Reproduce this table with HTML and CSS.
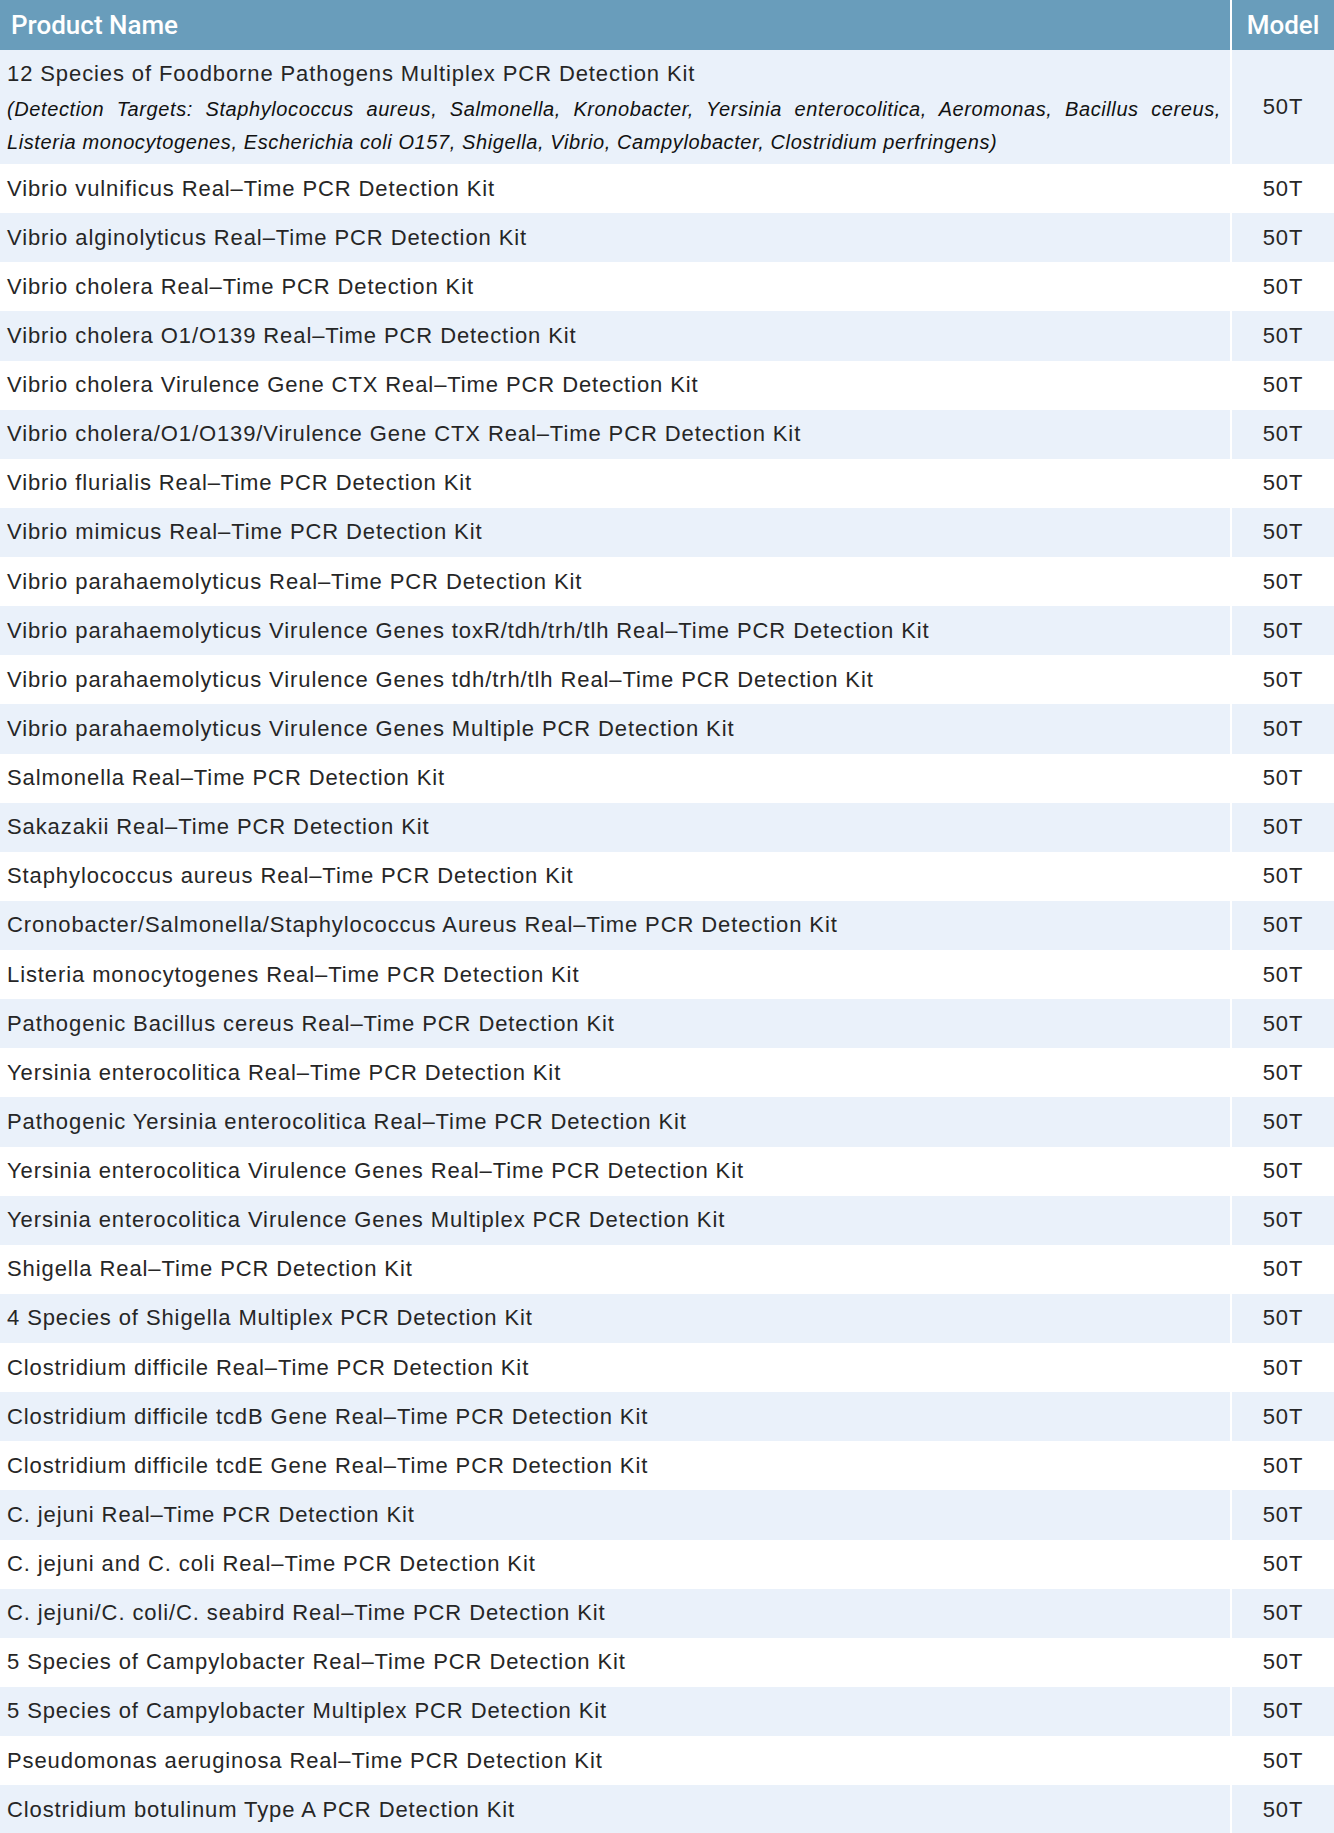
FILE: index.html
```html
<!DOCTYPE html>
<html lang="en">
<head>
<meta charset="utf-8">
<title>Product List</title>
<link rel="stylesheet" href="styles.css">
</head>
<body>
<div class="table">
  <div class="row head">
    <div class="name">Product Name</div>
    <div class="model">Model</div>
  </div>
  <div class="row tall alt">
    <div class="name">
      <div class="title">12 Species of Foodborne Pathogens Multiplex PCR Detection Kit</div>
      <div class="targets">(Detection Targets: Staphylococcus aureus, Salmonella, Kronobacter, Yersinia enterocolitica, Aeromonas, Bacillus cereus, Listeria monocytogenes, Escherichia coli O157, Shigella, Vibrio, Campylobacter, Clostridium perfringens)</div>
    </div>
    <div class="model">50T</div>
  </div>
  <div class="row"><div class="name">Vibrio vulnificus Real–Time PCR Detection Kit</div><div class="model">50T</div></div>
  <div class="row alt"><div class="name">Vibrio alginolyticus Real–Time PCR Detection Kit</div><div class="model">50T</div></div>
  <div class="row"><div class="name">Vibrio cholera Real–Time PCR Detection Kit</div><div class="model">50T</div></div>
  <div class="row alt"><div class="name">Vibrio cholera O1/O139 Real–Time PCR Detection Kit</div><div class="model">50T</div></div>
  <div class="row"><div class="name">Vibrio cholera Virulence Gene CTX Real–Time PCR Detection Kit</div><div class="model">50T</div></div>
  <div class="row alt"><div class="name">Vibrio cholera/O1/O139/Virulence Gene CTX Real–Time PCR Detection Kit</div><div class="model">50T</div></div>
  <div class="row"><div class="name">Vibrio flurialis Real–Time PCR Detection Kit</div><div class="model">50T</div></div>
  <div class="row alt"><div class="name">Vibrio mimicus Real–Time PCR Detection Kit</div><div class="model">50T</div></div>
  <div class="row"><div class="name">Vibrio parahaemolyticus Real–Time PCR Detection Kit</div><div class="model">50T</div></div>
  <div class="row alt"><div class="name">Vibrio parahaemolyticus Virulence Genes toxR/tdh/trh/tlh Real–Time PCR Detection Kit</div><div class="model">50T</div></div>
  <div class="row"><div class="name">Vibrio parahaemolyticus Virulence Genes tdh/trh/tlh Real–Time PCR Detection Kit</div><div class="model">50T</div></div>
  <div class="row alt"><div class="name">Vibrio parahaemolyticus Virulence Genes Multiple PCR Detection Kit</div><div class="model">50T</div></div>
  <div class="row"><div class="name">Salmonella Real–Time PCR Detection Kit</div><div class="model">50T</div></div>
  <div class="row alt"><div class="name">Sakazakii Real–Time PCR Detection Kit</div><div class="model">50T</div></div>
  <div class="row"><div class="name">Staphylococcus aureus Real–Time PCR Detection Kit</div><div class="model">50T</div></div>
  <div class="row alt"><div class="name">Cronobacter/Salmonella/Staphylococcus Aureus Real–Time PCR Detection Kit</div><div class="model">50T</div></div>
  <div class="row"><div class="name">Listeria monocytogenes Real–Time PCR Detection Kit</div><div class="model">50T</div></div>
  <div class="row alt"><div class="name">Pathogenic Bacillus cereus Real–Time PCR Detection Kit</div><div class="model">50T</div></div>
  <div class="row"><div class="name">Yersinia enterocolitica Real–Time PCR Detection Kit</div><div class="model">50T</div></div>
  <div class="row alt"><div class="name">Pathogenic Yersinia enterocolitica Real–Time PCR Detection Kit</div><div class="model">50T</div></div>
  <div class="row"><div class="name">Yersinia enterocolitica Virulence Genes Real–Time PCR Detection Kit</div><div class="model">50T</div></div>
  <div class="row alt"><div class="name">Yersinia enterocolitica Virulence Genes Multiplex PCR Detection Kit</div><div class="model">50T</div></div>
  <div class="row"><div class="name">Shigella Real–Time PCR Detection Kit</div><div class="model">50T</div></div>
  <div class="row alt"><div class="name">4 Species of Shigella Multiplex PCR Detection Kit</div><div class="model">50T</div></div>
  <div class="row"><div class="name">Clostridium difficile Real–Time PCR Detection Kit</div><div class="model">50T</div></div>
  <div class="row alt"><div class="name">Clostridium difficile tcdB Gene Real–Time PCR Detection Kit</div><div class="model">50T</div></div>
  <div class="row"><div class="name">Clostridium difficile tcdE Gene Real–Time PCR Detection Kit</div><div class="model">50T</div></div>
  <div class="row alt"><div class="name">C. jejuni Real–Time PCR Detection Kit</div><div class="model">50T</div></div>
  <div class="row"><div class="name">C. jejuni and C. coli Real–Time PCR Detection Kit</div><div class="model">50T</div></div>
  <div class="row alt"><div class="name">C. jejuni/C. coli/C. seabird Real–Time PCR Detection Kit</div><div class="model">50T</div></div>
  <div class="row"><div class="name">5 Species of Campylobacter Real–Time PCR Detection Kit</div><div class="model">50T</div></div>
  <div class="row alt"><div class="name">5 Species of Campylobacter Multiplex PCR Detection Kit</div><div class="model">50T</div></div>
  <div class="row"><div class="name">Pseudomonas aeruginosa Real–Time PCR Detection Kit</div><div class="model">50T</div></div>
  <div class="row alt"><div class="name">Clostridium botulinum Type A PCR Detection Kit</div><div class="model">50T</div></div>
</div>
</body>
</html>
```

FILE: styles.css
```css
html, body {
  margin: 0;
  padding: 0;
  background: #ffffff;
}

.table {
  width: 1334px;
  font-family: "Liberation Sans", Arial, sans-serif;
  color: #262626;
}

.row {
  display: grid;
  grid-template-columns: 1230px 102px;
  column-gap: 2px;
  height: 49.13px;
  font-size: 22px;
  letter-spacing: 0.9px;
}

.row .name {
  display: flex;
  align-items: center;
  padding-left: 7px;
}

.row .model {
  display: flex;
  align-items: center;
  justify-content: center;
}

.row.alt .name,
.row.alt .model {
  background: #eaf1fa;
}

.row.head {
  height: 50px;
  font-family: Roboto, "Liberation Sans", sans-serif;
  font-weight: 500;
  font-size: 26px;
  letter-spacing: 0;
  color: #ffffff;
}

.row.head .name,
.row.head .model {
  background: #699dbb;
}

.row.head .name {
  padding-left: 11px;
}

.row.tall {
  height: 114px;
}

.row.tall .name {
  display: block;
  padding: 8px 9px 0 7px;
}

.title {
  line-height: 32px;
  margin-bottom: 3px;
}

.targets {
  font-style: italic;
  font-size: 20px;
  letter-spacing: 0.6px;
  line-height: 33px;
  text-align: justify;
  color: #111111;
}
```
